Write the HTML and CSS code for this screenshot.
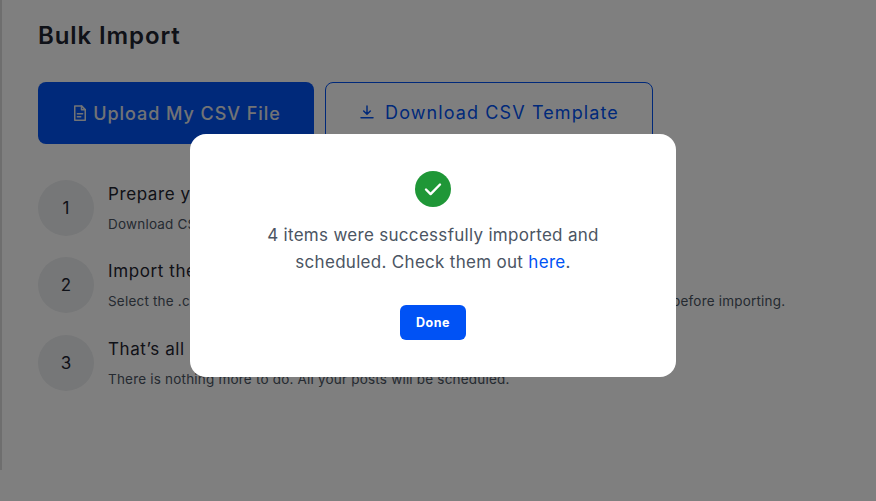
FILE: index.html
```html
<!DOCTYPE html>
<html lang="en">
<head>
  <meta charset="UTF-8" />
  <meta name="viewport" content="width=device-width, initial-scale=1" />
  <title>Bulk Import</title>
  <link rel="stylesheet" href="styles.css">
</head>
<body>
  <div class="page">
    <h1 class="page-title">Bulk Import</h1>

    <div class="actions">
      <button class="btn-upload">
        <svg class="btn-icon" viewBox="0 0 24 24" width="18" height="18" fill="none" stroke="currentColor" stroke-width="2" stroke-linejoin="round" stroke-linecap="round">
          <path d="M6 2.5h8l5 5v14H5v-19z" />
          <path d="M14 2.5v5h5" />
          <path d="M8.5 13h7M8.5 17h4.5" />
        </svg>
        Upload My CSV File
      </button>
      <button class="btn-download">
        <svg class="btn-icon" viewBox="0 0 24 24" width="16" height="16" fill="none" stroke="currentColor" stroke-width="2.2" stroke-linejoin="round" stroke-linecap="round">
          <path d="M12 3v12M7 10.5l5 5 5-5" />
          <path d="M3 20.5h18" />
        </svg>
        Download CSV Template
      </button>
    </div>

    <ol class="steps">
      <li class="step">
        <div class="step-num">1</div>
        <div>
          <div class="step-title">Prepare your CSV file</div>
          <div class="step-text">Download CSV template and fill it in with your posts.</div>
        </div>
      </li>
      <li class="step">
        <div class="step-num">2</div>
        <div>
          <div class="step-title">Import the file</div>
          <div class="step-text">Select the .csv file from your computer. You will be able to preview and edit the posts before importing.</div>
        </div>
      </li>
      <li class="step">
        <div class="step-num">3</div>
        <div>
          <div class="step-title">That’s all</div>
          <div class="step-text">There is nothing more to do. All your posts will be scheduled.</div>
        </div>
      </li>
    </ol>
  </div>

  <!-- Success dialog -->
  <div class="overlay">
    <div class="modal">
      <div class="check">
        <svg viewBox="0 0 24 24" width="24" height="24" fill="none" stroke="#fff" stroke-width="2.4" stroke-linecap="round" stroke-linejoin="round">
          <path d="M5 12.5l4.6 4.6L19 7.5" />
        </svg>
      </div>
      <p class="modal-text">4 items were successfully imported and scheduled. Check them out <a href="#">here</a>.</p>
      <button class="btn-done">Done</button>
    </div>
  </div>
</body>
</html>
```

FILE: styles.css
```css
/* Basic resets */
body, html {
  margin: 0;
  padding: 0;
  height: 100%;
  overflow: hidden;
  background: #fff;
  font-family: "Inter", "Noto Sans", sans-serif;
}

.page {
  height: 470px;
  padding: 22px 0 0 36px;
  box-sizing: border-box;
  border-left: 2px solid #ddd;
}

.page-title {
  margin: 0;
  font-size: 24px;
  line-height: 28px;
  font-weight: 600;
  letter-spacing: 0.9px;
  color: #1f2430;
}

/* Upload and download buttons */
.actions {
  display: flex;
  gap: 11px;
  margin-top: 32px;
}

.actions button {
  display: flex;
  align-items: center;
  justify-content: center;
  font-family: inherit;
  font-size: 18px;
  border-radius: 8px;
}

.btn-icon {
  margin-right: 4px;
}

.btn-upload {
  width: 276px;
  height: 62px;
  background: #0052f5;
  color: #e5e7eb;
  border: none;
  font-weight: 500;
  letter-spacing: 0.95px;
}

.btn-download {
  width: 328px;
  height: 62px;
  padding-bottom: 3px;
  background: #fff;
  color: #0052f5;
  border: 1px solid #0052f5;
  letter-spacing: 1.1px;
}

.btn-download .btn-icon {
  margin-right: 10px;
}

/* Numbered steps */
.steps {
  list-style: none;
  margin: 36px 0 0;
  padding: 0;
  display: flex;
  flex-direction: column;
  gap: 21.4px;
}

.step {
  display: flex;
  gap: 14px;
  height: 56px;
}

.step-num {
  flex: none;
  width: 56px;
  height: 56px;
  border-radius: 50%;
  background: #eceef0;
  color: #1f2430;
  display: flex;
  align-items: center;
  justify-content: center;
  font-size: 17px;
}

.step-title {
  margin-top: 3px;
  font-size: 17px;
  line-height: 22px;
  color: #1f2430;
  letter-spacing: 0.6px;
}

.step-text {
  margin-top: 10px;
  font-size: 13.5px;
  line-height: 18px;
  letter-spacing: 0.2px;
  color: #4b5563;
}

/* Dialog over a dimmed page */
.overlay {
  position: fixed;
  top: 0;
  left: 0;
  right: 0;
  bottom: 0;
  padding: 9px 10px 0 0;
  display: flex;
  align-items: center;
  justify-content: center;
  background: rgba(0, 0, 0, 0.5);
}

.modal {
  width: 486px;
  height: 243px;
  box-sizing: border-box;
  padding-top: 37px;
  background: #fff;
  border-radius: 16px;
  display: flex;
  flex-direction: column;
  align-items: center;
}

.check {
  width: 36px;
  height: 36px;
  border-radius: 50%;
  background: #1f9737;
  display: flex;
  align-items: center;
  justify-content: center;
}

.modal-text {
  width: 380px;
  margin: 15px 0 0;
  text-align: center;
  font-size: 17px;
  line-height: 27px;
  letter-spacing: 0.3px;
  color: #4b5563;
}

.modal-text a {
  color: #0052f5;
  text-decoration: none;
}

.btn-done {
  margin-top: 29px;
  width: 66px;
  height: 35px;
  background: #0052f5;
  color: #fff;
  border: none;
  border-radius: 6px;
  font-family: inherit;
  font-size: 12.5px;
  font-weight: 700;
  letter-spacing: 0.5px;
}
```
